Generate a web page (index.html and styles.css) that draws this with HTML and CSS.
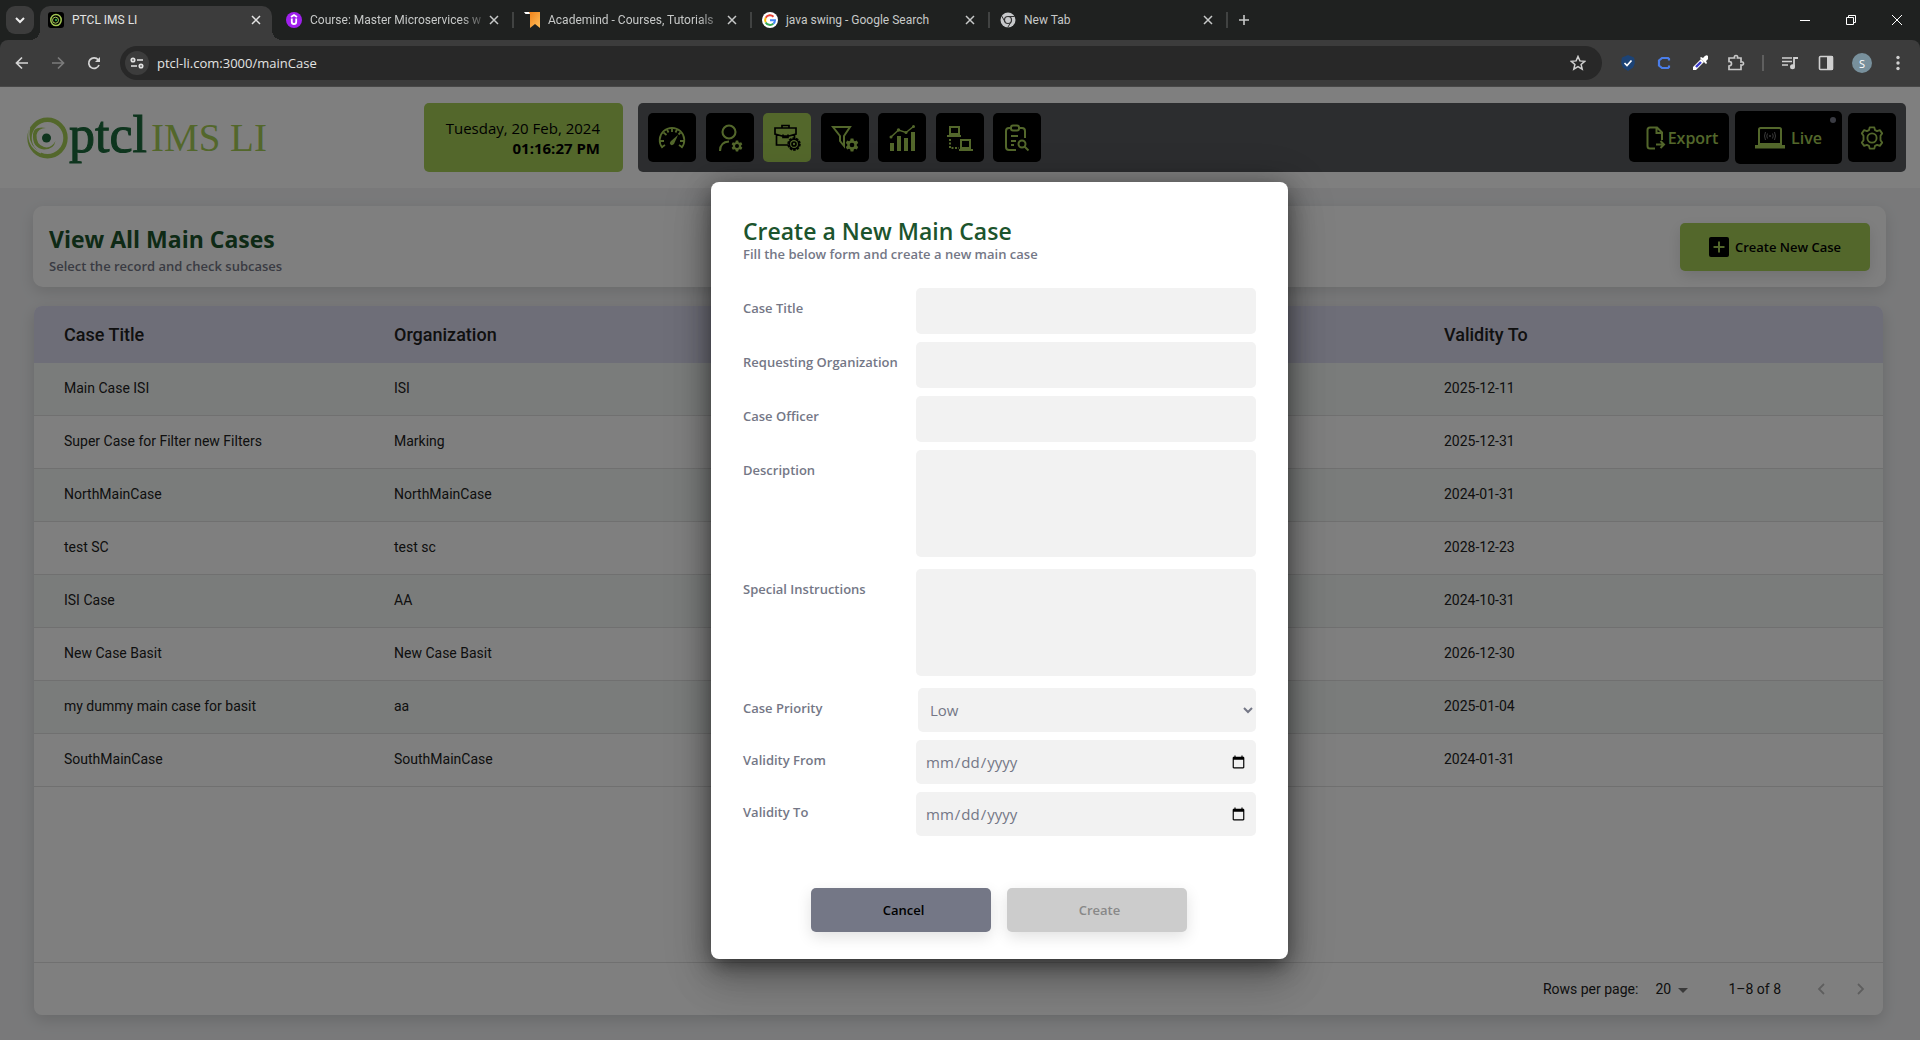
FILE: index.html
```html
<!DOCTYPE html>
<html lang="en">
<head>
<meta charset="utf-8">
<title>PTCL IMS LI</title>
<link rel="stylesheet" href="styles.css">
</head>
<body>
<svg class="defs" width="0" height="0" aria-hidden="true">
  <symbol id="close" viewBox="0 0 10 10"><path d="M1 1l8 8M9 1L1 9" fill="none" stroke="currentColor" stroke-width="1.5"/></symbol>
  <symbol id="gear" viewBox="0 0 24 24"><path fill-rule="evenodd" fill="currentColor" d="M9.6 1h4.8l.7 3.3 2 1.1 3.2-1 2.4 4.1-2.5 2.3v2.4l2.5 2.3-2.4 4.1-3.2-1-2 1.1-.7 3.3H9.6l-.7-3.3-2-1.1-3.2 1-2.4-4.1 2.5-2.3v-2.4L1.300 8.500l2.400-4.100 3.200 1 2-1.100zM12 8a4 4 0 1 0 0 8 4 4 0 0 0 0-8z"/></symbol>
</svg>

<header class="browser">
  <div class="tabstrip">
    <button class="tab-search" aria-label="Search tabs"><svg width="10" height="8" viewBox="0 0 10 8"><path d="M1 2l4 4 4-4" fill="none" stroke="currentColor" stroke-width="2"/></svg></button>
    <div class="tab active">
      <svg width="16" height="16" viewBox="0 0 16 16"><rect width="16" height="16" rx="3" fill="#000"/><g fill="none" stroke="#a4c853"><ellipse cx="8" cy="8" rx="5.200" ry="5.600" stroke-width="1.500"/><circle cx="7.500" cy="8.200" r="3"/></g><circle cx="8" cy="8" r="1.200" fill="#27a04c"/></svg>
      <a href="#">PTCL IMS LI</a>
      <button aria-label="Close tab"><svg width="10" height="10"><use href="#close"/></svg></button>
    </div>
    <div class="tab clipped">
      <svg width="16" height="16" viewBox="0 0 16 16"><circle cx="8" cy="8" r="8" fill="#a020ee"/><path d="M5 5l3-2 3 2M5.800 6.500v3.500q0 2 2.200 2t2.200-2V6.500" fill="none" stroke="#fff" stroke-width="1.800"/></svg>
      <a href="#">Course: Master Microservices w</a>
      <button aria-label="Close tab"><svg width="10" height="10"><use href="#close"/></svg></button>
    </div>
    <div class="tab clipped">
      <svg width="16" height="16" viewBox="0 0 16 16"><defs><linearGradient id="orange" x2="1" y2="1"><stop stop-color="#ef7d14"/><stop offset="1" stop-color="#ffc05c"/></linearGradient></defs><path d="M4 0h12v16l-5-4-5 4V2z" fill="url(#orange)"/><path d="M0 0h5l1 2H1.500z" fill="#fff"/></svg>
      <a href="#">Academind - Courses, Tutorials</a>
      <button aria-label="Close tab"><svg width="10" height="10"><use href="#close"/></svg></button>
    </div>
    <div class="tab">
      <svg width="16" height="16" viewBox="0 0 16 16"><circle cx="8" cy="8" r="8" fill="#fff"/><g fill="none" stroke-width="2"><path d="M11.500 4.700A5 5 0 0 0 3.700 5.700" stroke="#ea4335"/><path d="M3.700 5.700a5 5 0 0 0 0 4.700" stroke="#fbbc05"/><path d="M3.700 10.400a5 5 0 0 0 7.600 1.300" stroke="#34a853"/><path d="M11.300 11.700Q13 10.500 13 8.200H8" stroke="#4285f4"/></g></svg>
      <a href="#">java swing - Google Search</a>
      <button aria-label="Close tab"><svg width="10" height="10"><use href="#close"/></svg></button>
    </div>
    <div class="tab">
      <svg width="16" height="16" viewBox="0 0 16 16"><circle cx="8" cy="8" r="7.500" fill="#c7c9cb"/><g fill="none" stroke="#333"><circle cx="8" cy="8" r="3.500" stroke-width="1.200"/><path d="M8 4.500h6.700M5 9.800L1.700 4M11 9.800L7.700 15.500"/></g></svg>
      <a href="#">New Tab</a>
      <button aria-label="Close tab"><svg width="10" height="10"><use href="#close"/></svg></button>
    </div>
    <button class="new-tab" aria-label="New tab"><svg width="12" height="12" viewBox="0 0 12 12"><path d="M6 1v10M1 6h10" stroke="currentColor" stroke-width="1.600"/></svg></button>
    <div class="window-controls">
      <button aria-label="Minimize"><svg width="10" height="10" viewBox="0 0 10 10"><path d="M0 5.500h10" stroke="#fff"/></svg></button>
      <button aria-label="Restore"><svg width="10" height="10" viewBox="0 0 10 10"><path d="M.5 2.500h7v7h-7zM2.500 2.500v-2h7v7h-2" fill="none" stroke="#fff"/></svg></button>
      <button aria-label="Close"><svg width="10" height="10" viewBox="0 0 10 10"><path d="M0 0l10 10M10 0L0 10" stroke="#fff"/></svg></button>
    </div>
  </div>
  <div class="toolbar">
    <button aria-label="Back"><svg width="14" height="14" viewBox="0 0 14 14"><path d="M13 7H2M7 1.500L1.500 7 7 12.500" fill="none" stroke="#d5d5d5" stroke-width="1.700"/></svg></button>
    <button aria-label="Forward"><svg width="14" height="14" viewBox="0 0 14 14"><path d="M1 7h11M7 1.500L12.500 7 7 12.500" fill="none" stroke="#7b7b7b" stroke-width="1.700"/></svg></button>
    <button aria-label="Reload"><svg width="14" height="14" viewBox="0 0 14 14"><path d="M12 9a5.300 5.300 0 1 1-.8-5.200" fill="none" stroke="#d5d5d5" stroke-width="1.700"/><path d="M13 1v5H8z" fill="#d5d5d5"/></svg></button>
    <div class="address">
      <button class="site-info" aria-label="Site information"><svg width="14" height="12" viewBox="0 0 14 12"><g fill="none" stroke="#e3e3e3" stroke-width="1.700"><circle cx="3" cy="3" r="1.700"/><path d="M7 3h6M1 9h6"/><circle cx="11" cy="9" r="1.700"/></g></svg></button>
      <input aria-label="Address" value="ptcl-li.com:3000/mainCase">
      <button aria-label="Bookmark"><svg width="16" height="16" viewBox="0 0 16 16"><path d="M8 1.500l1.900 4.400 4.800.4-3.600 3.100 1.100 4.700L8 11.600l-4.200 2.500 1.100-4.700-3.600-3.100 4.800-.4z" fill="none" stroke="#d0d0d0" stroke-width="1.500"/></svg></button>
    </div>
    <div class="extensions">
      <button aria-label="Checker"><svg width="16" height="16" viewBox="0 0 16 16"><path d="M8 0l6 2.500q2 6-1 10L8 16l-5-3.500q-3-4-1-10z" fill="#1d4375"/><path d="M4.500 8l2.500 2.500 4.500-5" fill="none" stroke="#fff" stroke-width="1.700"/></svg></button>
      <button aria-label="Clipper"><svg width="14" height="14" viewBox="0 0 14 14"><path d="M12 4.500V3l-1-1H5L2 4.500v5L5 12h6l1-1V9.500" fill="none" stroke="#4a7de8" stroke-width="2.200"/></svg></button>
      <button aria-label="Color picker"><svg width="16" height="16" viewBox="0 0 16 16"><path d="M1 15v-3l8-8 3 3-8 8z" fill="#fff"/><path d="M4 12l5-5" stroke="#3b3bd0" stroke-width="2.400"/><path d="M8 3l1-1 2 1q3-4 5-2t-2 5l1 2-1 1z" fill="#fff"/></svg></button>
      <button aria-label="Extensions"><svg width="18" height="18" viewBox="0 0 18 18"><path d="M2 4h5.500q-.5-2.500 1.500-2.500T10.500 4H14v4q2.500-.5 2.500 1.500T14 11v4.500H2V12q2.500 0 2.500-2.300T2 7.500z" fill="none" stroke="#c7c7c7" stroke-width="1.700"/></svg></button>
      <span class="bar"></span>
      <button aria-label="Media"><svg width="16" height="14" viewBox="0 0 16 14"><path d="M0 2h10M0 5.500h10M0 9h6" stroke="#d0d0d0" stroke-width="1.600"/><path d="M12 10.500V2h4" fill="none" stroke="#d0d0d0" stroke-width="1.800"/><circle cx="10.500" cy="10.700" r="2.500" fill="#d0d0d0"/></svg></button>
      <button aria-label="Side panel"><svg width="16" height="16" viewBox="0 0 16 16"><rect x="1.500" y="1.500" width="13" height="13" rx="1" fill="none" stroke="#d0d0d0" stroke-width="1.600"/><path d="M9 1h6v14H9z" fill="#d0d0d0"/></svg></button>
      <button class="avatar" aria-label="Profile">S</button>
      <button aria-label="Menu"><svg width="4" height="16" viewBox="0 0 4 16" fill="#d0d0d0"><circle cx="2" cy="2.500" r="1.700"/><circle cx="2" cy="8" r="1.700"/><circle cx="2" cy="13.500" r="1.700"/></svg></button>
    </div>
  </div>
</header>

<div class="page">
  <header class="topbar">
    <a class="logo" href="#">
      <svg width="43" height="42" viewBox="0 0 43 42"><ellipse cx="21.500" cy="21" rx="18" ry="18.200" fill="none" stroke="#a6ce56" stroke-width="4.400"/><path d="M3.500 11Q0 29 15 36" fill="none" stroke="#fff" stroke-width="1.300"/><path d="M7 17Q6 31 18 32.500q10 0 11.500-8.500-4.500 8-11.500 6-8-2.500-7.500-12Q12 11 20 11 8 9 7 17z" fill="#a6ce56"/><circle cx="20.500" cy="21" r="4.500" fill="#1c6a3c"/></svg>
      <span class="logo-ptcl">ptcl</span><span class="logo-ims">IMS LI</span>
    </a>
    <div class="clock"><span>Tuesday, 20 Feb, 2024</span><strong>01:16:27 PM</strong></div>
    <div class="menubar">
      <nav class="menu">
        <button aria-label="Dashboard"><svg width="28" height="28" viewBox="0 0 28 28"><path d="M4.500 24A12.300 12.300 0 1 1 23.500 24" fill="none" stroke="currentColor" stroke-width="1.800"/><path d="M2 17h4M22 17h4M14 4v4M5.500 8.500l3 2.500M22.500 8.500l-2 2M9 5.500l1.500 3M19 5.500L17.500 8.500M4 23l3-2M24 23l-3-2" stroke="currentColor" stroke-width="1.800"/><path d="M20 11l-4 9q-2 2-3.500.5T13 17z" fill="currentColor"/></svg></button>
        <button aria-label="Users"><svg width="28" height="28" viewBox="0 0 28 28"><g fill="none" stroke="currentColor" stroke-width="2.100"><circle cx="13" cy="8" r="6.500"/><path d="M4 27q0-9 9-9.500"/></g><svg x="15" y="16" width="12" height="12"><use href="#gear"/></svg></svg></button>
        <button class="current" aria-label="Cases"><svg width="28" height="28" viewBox="0 0 28 28"><g fill="none" stroke="currentColor" stroke-width="1.700"><path d="M2 4h21v6l-7 2H9l-7-2zM9 4V1.500h7V4M3.500 11v10H15M21.500 10v5M10 10.500v3h5v-3"/><circle cx="21" cy="20" r="5.500" stroke-width="2.500" stroke-dasharray="2.400 1"/><circle cx="21" cy="20" r="4.800"/><circle cx="21" cy="20" r="2"/></g></svg></button>
        <button aria-label="Filters"><svg width="28" height="28" viewBox="0 0 28 28"><path d="M2 3h17l-6 9v10l-4-5v-5z" fill="none" stroke="currentColor" stroke-width="2"/><svg x="14" y="14" width="14" height="14"><use href="#gear"/></svg></svg></button>
        <button aria-label="Reports"><svg width="28" height="28" viewBox="0 0 28 28"><g fill="currentColor"><path d="M2 19h4v8H2zM9 12h4v15H9zM16 14h4v13h-4zM23 8h4v19h-4z"/><circle cx="3" cy="13" r="1.500"/><circle cx="10.500" cy="6" r="1.700"/><circle cx="18" cy="8.500" r="1.500"/><circle cx="25.500" cy="2.500" r="1.500"/></g><path d="M3 13l7.500-7L18 8.500l7.500-6" fill="none" stroke="currentColor" stroke-width="1.500"/></svg></button>
        <button aria-label="Network"><svg width="28" height="28" viewBox="0 0 28 28"><g fill="none" stroke="currentColor" stroke-width="2"><path d="M4 3h9v7H4zM1 12h14M15 16h9v8h-9zM13 26h14"/><path d="M4 15v9h9" stroke-dasharray="2 1.500"/></g></svg></button>
        <button aria-label="Audit"><svg width="28" height="28" viewBox="0 0 28 28"><g fill="none" stroke="currentColor" stroke-width="2"><path d="M8 4H6Q3 4 3 7v16q0 3 3 3h7M16 4h3q3 0 3 3v7"/><rect x="8" y="1.500" width="8" height="5" rx="2"/><path d="M8 12h7M8 17h5M8 21h3"/><circle cx="19" cy="20" r="3.500"/><path d="M21.500 22.500l4 4"/></g></svg></button>
      </nav>
      <div class="actions">
        <button class="export"><svg width="20" height="24" viewBox="0 0 20 24"><path d="M9 22.500H4q-2.500 0-2.500-2.500V4Q1.500 1.500 4 1.500h7l5 5V14M10.500 2v5H16M10 18.500h8M14.500 15l3.500 3.500-3.500 3.500" fill="none" stroke="currentColor" stroke-width="2"/></svg>Export</button>
        <button class="live"><svg width="30" height="24" viewBox="0 0 30 24"><path d="M4 18V3.500Q4 2 5.500 2h19Q26 2 26 3.500V18z" fill="none" stroke="currentColor" stroke-width="2"/><path d="M0 19h30v3.500H0z" fill="currentColor"/><g fill="none" stroke="#777"><circle cx="15" cy="10" r=".7"/><path d="M12.500 7.500q-1.500 2.500 0 5M17.500 7.500q1.500 2.500 0 5M10.500 6q-2 4 0 8M19.500 6q2 4 0 8"/></g></svg>Live<span class="dot"></span></button>
        <button class="settings" aria-label="Settings"><svg width="24" height="24" viewBox="0 0 26 26"><g fill="none" stroke="currentColor" stroke-width="2"><path d="M10.500 1.500h5l.8 3 2.200 1 3-1 2.500 3.500-1.800 2.500v5L24 18l-2.500 3.500-3-1-2.200 1-.8 3h-5l-.8-3-2.200-1-3 1L2 18l1.800-2.500v-5L2 8l2.500-3.500 3 1 2.200-1z" stroke-linejoin="round"/><circle cx="13" cy="13" r="5"/></g></svg></button>
      </div>
    </div>
  </header>

  <main class="content">
    <section class="heading">
      <div><h1>View All Main Cases</h1><p>Select the record and check subcases</p></div>
      <button class="create-case"><svg width="20" height="20" viewBox="0 0 20 20"><rect width="20" height="20" rx="2" fill="#000"/><path d="M10 4.500v11M4.500 10h11" stroke="#a6ce56" stroke-width="2"/></svg>Create New Case</button>
    </section>
    <section class="grid">
      <table>
        <colgroup><col class="col-title"><col><col class="col-date"></colgroup>
        <thead><tr><th>Case Title</th><th>Organization</th><th>Validity To</th></tr></thead>
        <tbody>
          <tr><td>Main Case ISI</td><td>ISI</td><td>2025-12-11</td></tr>
          <tr><td>Super Case for Filter new Filters</td><td>Marking</td><td>2025-12-31</td></tr>
          <tr><td>NorthMainCase</td><td>NorthMainCase</td><td>2024-01-31</td></tr>
          <tr><td>test SC</td><td>test sc</td><td>2028-12-23</td></tr>
          <tr><td>ISI Case</td><td>AA</td><td>2024-10-31</td></tr>
          <tr><td>New Case Basit</td><td>New Case Basit</td><td>2026-12-30</td></tr>
          <tr><td>my dummy main case for basit</td><td>aa</td><td>2025-01-04</td></tr>
          <tr><td>SouthMainCase</td><td>SouthMainCase</td><td>2024-01-31</td></tr>
        </tbody>
      </table>
      <footer class="pager">
        <label for="rows">Rows per page:</label>
        <div class="rows-select"><select id="rows"><option>20</option></select><svg width="10" height="5" viewBox="0 0 10 5"><path d="M0 0h10L5 5z" fill="#757575"/></svg></div>
        <span class="range">1–8 of 8</span>
        <button aria-label="Previous page"><svg width="8" height="12" viewBox="0 0 8 12"><path d="M7 1L2 6l5 5" fill="none" stroke="currentColor" stroke-width="1.800"/></svg></button>
        <button aria-label="Next page"><svg width="8" height="12" viewBox="0 0 8 12"><path d="M1 1l5 5-5 5" fill="none" stroke="currentColor" stroke-width="1.800"/></svg></button>
      </footer>
    </section>
  </main>

  <div class="backdrop">
    <form class="dialog" role="dialog" aria-labelledby="dialog-title">
      <h2 id="dialog-title">Create a New Main Case</h2>
      <p>Fill the below form and create a new main case</p>
      <div class="fields">
        <div class="field"><label for="title">Case Title</label><input id="title" type="text"></div>
        <div class="field"><label for="org">Requesting Organization</label><input id="org" type="text"></div>
        <div class="field"><label for="officer">Case Officer</label><input id="officer" type="text"></div>
        <div class="field tall"><label for="description">Description</label><textarea id="description"></textarea></div>
        <div class="field tall"><label for="instructions">Special Instructions</label><textarea id="instructions"></textarea></div>
        <div class="field"><label for="priority">Case Priority</label><select id="priority"><option>Low</option></select></div>
        <div class="field"><label for="from">Validity From</label><input id="from" type="date"></div>
        <div class="field"><label for="to">Validity To</label><input id="to" type="date"></div>
      </div>
      <div class="dialog-actions">
        <button type="button" class="cancel">Cancel</button>
        <button type="submit" class="create" disabled>Create</button>
      </div>
    </form>
  </div>
</div>
</body>
</html>
```
FILE: styles.css
```css
:root {
  --lime: #a6ce56;
  --green: #1c542d;
  --slate: #747786;
  --ui: "Open Sans", "Noto Sans", sans-serif;
}
* { box-sizing: border-box; }
body {
  margin: 0;
  min-height: 100vh;
  display: flex;
  flex-direction: column;
  font-family: var(--ui);
}
button, input, select, textarea { font: inherit; border: 0; margin: 0; }
button { padding: 0; background: none; color: inherit; display: flex; align-items: center; justify-content: center; }
a { color: inherit; text-decoration: none; }
svg { display: block; flex: none; }
.defs { position: absolute; }

/* Browser frame */
.browser { background: #1f2120; color: #c7c9c8; font-size: 12px; }
.tabstrip { display: flex; height: 40px; padding: 6px 0 0 6px; font-family: Roboto, sans-serif; }
.tab-search { width: 28px; height: 28px; border-radius: 9px; background: #3c3c3c; color: #eee; margin-right: 6px; }
.tab { width: 238px; height: 34px; padding: 0 17px 6px 8px; display: flex; align-items: center; gap: 8px; position: relative; }
.tab.active { width: 232px; margin-right: 6px; padding: 0 11px 6px 8px; background: #3c3c3c; border-radius: 10px 10px 0 0; color: #e3e3e3; }
.tab.active::before, .tab.active::after {
  content: ""; position: absolute; bottom: 0; width: 10px; height: 10px;
}
.tab.active::before { right: 100%; background: radial-gradient(circle at 0 0, transparent 10px, #3c3c3c 10px); }
.tab.active::after { left: 100%; background: radial-gradient(circle at 100% 0, transparent 10px, #3c3c3c 10px); }
.tab:not(.active)::after { content: ""; position: absolute; right: 2px; top: 6px; width: 2px; height: 16px; background: #414342; }
.tab a { flex: 1; white-space: nowrap; }
.tab.clipped a { mask-image: linear-gradient(to right, #000 150px, transparent 180px); }
.new-tab { width: 28px; height: 28px; }
.window-controls { display: flex; margin-left: auto; height: 28px; }
.window-controls button { width: 46px; }
.toolbar { display: flex; align-items: center; height: 47px; padding: 0 12px 0 4px; background: #3c3c3c; border-bottom: 1px solid #484848; border-radius: 8px 8px 0 0; }
.toolbar > button { width: 36px; height: 34px; }
.address { flex: 1; display: flex; align-items: center; height: 34px; margin-left: 8px; padding: 0 12px 0 5px; background: #282828; border-radius: 17px; }
.site-info { width: 24px; height: 24px; border-radius: 12px; background: #3c3c3c; }
.address input { flex: 1; padding: 0 8px; background: none; color: #e3e3e3; font-size: 13px; outline: none; }
.address button:last-child { width: 24px; }
.extensions { display: flex; align-items: center; margin-left: 8px; }
.extensions button { width: 36px; height: 34px; }
.extensions button:last-child { width: 20px; margin-left: 16px; }
.extensions .bar { width: 2px; height: 16px; margin: 0 8px; background: #5f5f5f; }
.extensions .avatar { width: 20px; height: 20px; margin-left: 8px; border-radius: 10px; background: #78909c; color: #fff; font-size: 11px; }

/* Application */
.page { flex: 1; position: relative; display: flex; flex-direction: column; background: #f2f3f5; }
.topbar { display: flex; height: 101px; padding: 16px 14px 0 26px; background: #fff; }
.logo { flex: none; width: 398px; height: 69px; display: flex; align-items: center; font-family: "Liberation Serif", serif; }
.logo-ptcl { margin-bottom: 6px; font-size: 52px; color: #1c6a3c; -webkit-text-stroke: 1px #1c6a3c; line-height: 60px; }
.logo-ims { margin-left: 4px; font-size: 39px; line-height: 60px; color: var(--lime); }
.clock { flex: none; width: 199px; height: 69px; padding-right: 23px; border-radius: 5px; background: var(--lime); display: flex; flex-direction: column; justify-content: center; align-items: flex-end; font-size: 15px; line-height: 20px; font-weight: 500; }
.clock strong { font-weight: 700; }
.menubar { flex: 1; height: 69px; margin-left: 15px; padding: 0 10px; display: flex; align-items: center; justify-content: space-between; border-radius: 5px; background: #585a5e; }
.menu { width: 393px; display: flex; justify-content: space-between; }
.menubar button { height: 49px; border-radius: 5px; background: #000; color: var(--lime); }
.menu button, .menubar .settings { width: 48px; }
.menubar .current { background: var(--lime); color: #000; }
.actions { display: flex; align-items: center; gap: 6px; font-size: 16px; font-weight: 600; }
.actions .export { width: 100px; padding-left: 6px; gap: 2px; }
.actions .live { position: relative; width: 107px; height: 53px; gap: 6px; }
.dot { position: absolute; top: 6px; right: 6px; width: 6px; height: 6px; border-radius: 3px; background: #747786; }

.content { flex: 1; display: flex; flex-direction: column; padding: 18px 34px 25px 33px; }
.heading { height: 81px; padding: 0 16px; display: flex; align-items: center; justify-content: space-between; background: #fff; border-radius: 10px; box-shadow: 0 5px 15px rgba(0, 0, 0, .12); }
h1, h2, p { margin: 0; }
h1, h2 { color: var(--green); font-size: 23px; font-weight: 700; }
h1 { padding-top: 9px; line-height: 30px; }
.heading p, .dialog p { color: var(--slate); font-size: 13px; font-weight: 600; }
.heading p { line-height: 24px; }
.create-case { width: 190px; height: 48px; gap: 6px; border-radius: 5px; background: var(--lime); color: #000; font-size: 13px; font-weight: 600; box-shadow: 0 5px 15px rgba(0, 0, 0, .12); }
.grid { flex: 1; display: flex; flex-direction: column; margin: 19px 3px 0 1px; background: #fff; border-radius: 8px; box-shadow: 0 5px 15px rgba(0, 0, 0, .14); font-family: Roboto, sans-serif; font-size: 14px; color: #212121; }
table { width: 100%; table-layout: fixed; border-collapse: separate; border-spacing: 0; }
.col-title { width: 350px; }
.col-date { width: 449px; }
th { height: 57px; padding: 0 10px; background: #dcdcf0; text-align: left; font-size: 18px; font-weight: 500; }
td { height: 53px; padding: 0 10px 2px; border-bottom: 1px solid #e0e0e0; }
th:first-child, td:first-child { padding-left: 30px; }
th:first-child { border-top-left-radius: 8px; }
th:last-child { border-top-right-radius: 8px; }
tbody tr:nth-child(odd) { background: #f5f9f7; }
.pager { margin-top: auto; height: 53px; padding-right: 2px; border-top: 1px solid #e0e0e0; display: flex; align-items: center; justify-content: flex-end; }
.rows-select { position: relative; width: 33px; margin: 0 40px 0 17px; }
.rows-select select { appearance: none; width: 33px; padding: 0; background: none; color: inherit; }
.rows-select svg { position: absolute; right: 0; top: 7px; }
.range { margin-right: 20px; }
.pager button { width: 40px; height: 40px; color: #bdbdbd; }

/* Dialog */
.backdrop { position: absolute; inset: 0; padding: 14px 0 0 79px; display: flex; align-items: center; justify-content: center; background: rgba(0, 0, 0, .5); }
.dialog { width: 577px; padding: 35px 32px 27px; border-radius: 8px; background: #fff; box-shadow: 0 11px 15px -7px rgba(0, 0, 0, .2), 0 24px 38px 3px rgba(0, 0, 0, .14), 0 9px 46px 8px rgba(0, 0, 0, .12), 0 5px 25px rgba(0, 0, 0, .4); }
.dialog h2 { line-height: 28px; font-weight: 600; }
.dialog p { line-height: 18px; }
.fields { display: flex; flex-direction: column; gap: 8px; margin-top: 25px; }
.field { display: flex; justify-content: space-between; }
.field.tall { margin-bottom: 4px; }
.field label { color: var(--slate); font-size: 13px; line-height: 40px; font-weight: 600; }
.field input, .field select, .field textarea { width: 340px; border-radius: 5px; background: #f2f2f2; color: var(--slate); font-size: 15px; font-weight: 500; }
.field input { height: 46px; padding: 0 8px 0 9px; }
.field textarea { height: 107px; padding: 10px; resize: none; }
.field select { width: 338px; height: 44px; padding: 0 0 0 8px; }
.field input[type="date"] { height: 44px; }
.dialog-actions { display: flex; justify-content: center; gap: 16px; margin-top: 52px; padding-right: 2px; }
.dialog-actions button { width: 180px; height: 44px; padding-left: 6px; border-radius: 5px; font-size: 13px; font-weight: 600; box-shadow: 0 5px 15px rgba(0, 0, 0, .12); }
.cancel { background: #747786; color: #000; }
.create { background: #ccc; color: #888; }
```
